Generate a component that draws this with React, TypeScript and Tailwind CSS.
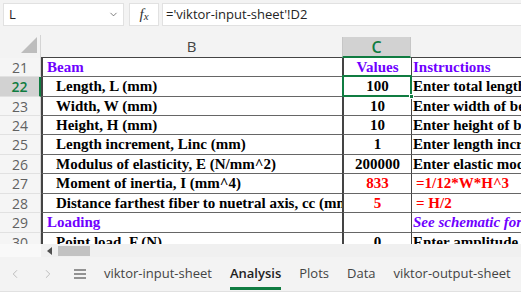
import { ChevronDown, ChevronLeft, ChevronRight } from "lucide-react";

type Row = {
  n: number;
  h: string;
  b: string;
  bClass?: string;
  c: string;
  cClass?: string;
  d: string;
  dClass?: string;
};

const rows: Row[] = [
  { n: 21, h: "h-[19px]", b: "Beam", bClass: "text-[#6f00ff] pl-[4px]", c: "Values", cClass: "text-[#6f00ff]", d: "Instructions", dClass: "text-[#6f00ff]" },
  { n: 22, h: "h-[20px]", b: "Length, L (mm)", c: "100", d: "Enter total length of beam" },
  { n: 23, h: "h-[19px]", b: "Width, W (mm)", c: "10", d: "Enter width of beam" },
  { n: 24, h: "h-[19px]", b: "Height, H (mm)", c: "10", d: "Enter height of beam" },
  { n: 25, h: "h-[20px]", b: "Length increment, Linc (mm)", c: "1", d: "Enter length increment" },
  { n: 26, h: "h-[19px]", b: "Modulus of elasticity, E (N/mm^2)", c: "200000", d: "Enter elastic modulus" },
  { n: 27, h: "h-[20px]", b: "Moment of inertia, I (mm^4)", c: "833", cClass: "text-[#ff0000]", d: " =1/12*W*H^3", dClass: "text-[#ff0000] pl-[4px]" },
  { n: 28, h: "h-[19px]", b: "Distance farthest fiber to nuetral axis, cc (mm)", c: "5", cClass: "text-[#ff0000]", d: " = H/2", dClass: "text-[#ff0000] pl-[4px]" },
  { n: 29, h: "h-[20px]", b: "Loading", bClass: "text-[#6f00ff] pl-[4px]", c: "", d: "See schematic for loading", dClass: "text-[#6f00ff] italic" },
  { n: 30, h: "h-[20px]", b: "Point load, F (N)", c: "0", d: "Enter amplitude of point load" },
];

const tabs = ["viktor-input-sheet", "Analysis", "Plots", "Data", "viktor-output-sheet"];

export default function App() {
  return (
    <div className="w-[521px] h-[296px] overflow-hidden bg-[#f3f3f3] flex flex-col font-['Open_Sans',sans-serif]">
      {/* formula bar */}
      <div className="h-[35px] shrink-0 flex items-start pt-[3px] pl-[3px]">
        <div className="w-[121px] h-[23px] bg-white border border-[#e1e1e1] flex items-center justify-between pl-[5px] pr-[4px] text-[13px] text-[#242424]">
          <span>L</span>
          <ChevronDown size={11} strokeWidth={1.5} className="text-[#444]" />
        </div>
        <div className="ml-[5px] w-[30px] h-[23px] bg-white border border-[#e1e1e1] flex items-center justify-center font-['Liberation_Serif',serif] italic text-[15px] text-[#333]">
          f<span className="text-[11px] mt-[3px]">x</span>
        </div>
        <div className="ml-[3px] flex-1 h-[23px] bg-white border border-r-0 border-[#e1e1e1] flex items-center pl-[3px] text-[13px] text-[#242424] whitespace-nowrap">
          ='viktor-input-sheet'!D2
        </div>
      </div>

      {/* column headers */}
      <div className="h-[23px] shrink-0 flex">
        <div className="w-[41px] border-r border-[#d4d4d4] flex items-end justify-end pr-[3px] pb-[5px]">
          <svg width="16" height="16" viewBox="0 0 16 16">
            <polygon points="0,16 16,16 16,0" fill="#bdbdbd" />
          </svg>
        </div>
        <div className="w-[301px] border-b border-[#444] flex items-center justify-center text-[15px] text-[#444]">
          B
        </div>
        <div className="w-[69px] mt-[2px] bg-[#d2d2d2] border-x border-[#c6c6c6] border-b-2 border-b-[#107c41] flex items-center justify-center text-[16px] font-semibold text-[#107c41]">
          C
        </div>
        <div className="flex-1 border-b border-[#444]" />
      </div>

      {/* grid */}
      <div className="h-[186px] shrink-0 overflow-hidden bg-white">
        {rows.map((r) => {
          const active = r.n === 22;
          return (
            <div key={r.n} className={`${r.h} flex`}>
              <div
                className={
                  active
                    ? "w-[41px] shrink-0 bg-[#d2d2d2] border-r-2 border-[#107c41] border-b border-b-[#e1e1e1] flex items-center justify-center text-[14px] font-semibold text-[#107c41]"
                    : "w-[41px] shrink-0 bg-[#f5f5f5] border-r border-[#d4d4d4] border-b border-b-[#e1e1e1] flex items-center justify-center text-[14px] text-[#616161]"
                }
              >
                {r.n}
              </div>
              <div
                className={`w-[301px] shrink-0 border-l-2 border-[#444] border-b border-b-[#666] flex items-center overflow-hidden whitespace-nowrap font-['Liberation_Serif',serif] font-bold text-[15px] ${r.bClass ?? "text-black pl-[13px]"}`}
              >
                {r.b}
              </div>
              <div
                className={`relative w-[69px] shrink-0 border-l-2 border-[#444] border-b border-b-[#666] flex items-center justify-center whitespace-nowrap font-['Liberation_Serif',serif] font-bold text-[15px] ${r.cClass ?? "text-black"}`}
              >
                {r.c}
                {active && (
                  <>
                    <div className="absolute -top-[2px] -left-[2px] -right-[1px] -bottom-[1px] border-2 border-[#107c41]" />
                    <div className="absolute -right-[3px] -bottom-[3px] w-[5px] h-[5px] bg-[#107c41] border border-white" />
                  </>
                )}
              </div>
              <div
                className={`flex-1 min-w-0 border-l border-[#444] border-b border-b-[#666] flex items-center overflow-hidden whitespace-nowrap font-['Liberation_Serif',serif] font-bold text-[15px] pl-[1px] ${r.dClass ?? "text-black"}`}
              >
                {r.d}
              </div>
            </div>
          );
        })}
      </div>

      {/* horizontal scrollbar */}
      <div className="h-[13px] shrink-0 flex">
        <div className="w-[41px] bg-[#f9f9f9]" />
        <div className="flex-1 bg-[#f0f0f0] flex items-center">
          <svg width="6" height="8" viewBox="0 0 6 8" className="ml-[6px]">
            <polygon points="5,0 5,8 0,4" fill="#505050" />
          </svg>
          <div className="ml-[5px] w-[32px] h-[10px] bg-[#c2c2c2]" />
        </div>
      </div>

      {/* sheet tabs */}
      <div className="h-[35px] shrink-0 flex items-center border-b border-[#e1e1e1] text-[13px] text-[#444]">
        <ChevronLeft size={14} strokeWidth={1.5} className="ml-[8px] text-[#b5b5b5]" />
        <ChevronRight size={14} strokeWidth={1.5} className="ml-[19px] text-[#b5b5b5]" />
        <svg width="12" height="10" viewBox="0 0 12 10" className="ml-[19px]">
          <path d="M0 1h12M0 5h12M0 9h12" stroke="#333" strokeWidth="1.2" />
        </svg>
        <div className="ml-[18px] flex items-stretch h-full gap-[18px]">
          {tabs.map((t) =>
            t === "Analysis" ? (
              <div key={t} className="relative flex items-center font-semibold text-[#222]">
                {t}
                <div className="absolute left-0 right-0 bottom-[1px] h-[3px] bg-[#107c41]" />
              </div>
            ) : (
              <div key={t} className="flex items-center whitespace-nowrap">
                {t}
              </div>
            ),
          )}
        </div>
      </div>
      <div className="flex-1 bg-white" />
    </div>
  );
}
